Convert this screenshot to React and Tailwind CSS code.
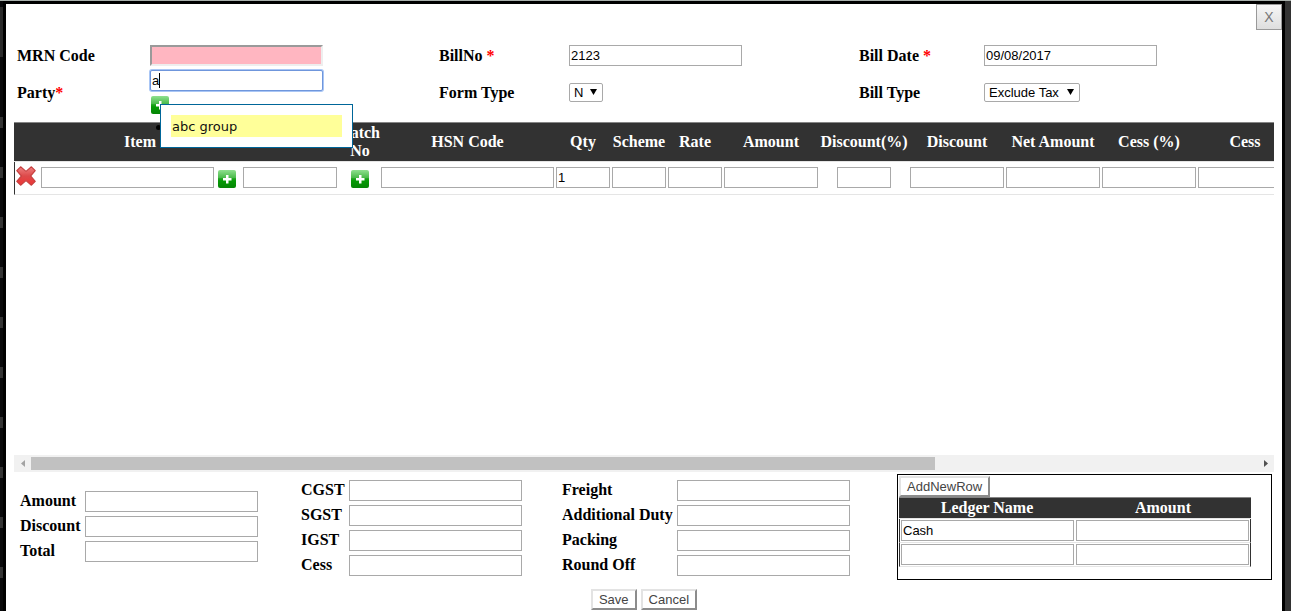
import React, { useState } from "react";

const FIELD =
  "block h-[21px] rounded-none border border-[#a9a9a9] bg-white px-px font-['Liberation_Sans',sans-serif] text-[13px] leading-4 text-black outline-none";
const WIDE = FIELD + " w-[173px]";
const MEDIUM = FIELD + " w-[94px]";
const SMALL = FIELD + " w-[54px]";

const COLUMNS = [
  { name: "", width: 26 },
  { name: "Item", width: 200 },
  { name: "", width: 100 },
  { name: "Batch No", width: 40 },
  { name: "HSN Code", width: 175 },
  { name: "Qty", width: 56 },
  { name: "Scheme", width: 56 },
  { name: "Rate", width: 56 },
  { name: "Amount", width: 96 },
  { name: "Discount(%)", width: 90 },
  { name: "Discount", width: 96 },
  { name: "Net Amount", width: 96 },
  { name: "Cess (%)", width: 96 },
  { name: "Cess", width: 96 },
  { name: "", width: 431 },
];

function PlusButton({ label }) {
  return (
    <button type="button" aria-label={label} className="block size-[18px] shrink-0">
      <svg viewBox="0 0 18 18" className="block size-[18px]">
        <defs>
          <linearGradient id="plusFill" x1="0" y1="0" x2="0" y2="1">
            <stop offset="0" stopColor="#8fe08f" />
            <stop offset="0.42" stopColor="#4cbb4c" />
            <stop offset="0.48" stopColor="#1ea51e" />
            <stop offset="0.6" stopColor="#069a06" />
            <stop offset="1" stopColor="#068506" />
          </linearGradient>
        </defs>
        <rect width="18" height="18" rx="2" fill="url(#plusFill)" />
        <path d="M8 5h2.500v3h3v2.500h-3v3H8v-3H5V8h3z" fill="#fff" />
      </svg>
    </button>
  );
}

function DeleteButton() {
  return (
    <button type="button" aria-label="Delete row" className="block size-5">
      <svg viewBox="0 0 20 20" className="block size-5">
        <defs>
          <linearGradient id="crossFill" x1="0" y1="0" x2="0" y2="1">
            <stop offset="0" stopColor="#ee8080" />
            <stop offset="0.5" stopColor="#dd4a4a" />
            <stop offset="1" stopColor="#ee3535" />
          </linearGradient>
        </defs>
        <path
          d="M4.600.8 10 5.400 15.400.8 19.200 4.600 14.600 10 19.200 15.400 15.400 19.200 10 14.600 4.600 19.200.8 15.400 5.400 10 .8 4.600z"
          fill="url(#crossFill)"
          stroke="#c84040"
          strokeWidth="1.200"
          strokeLinejoin="round"
        />
      </svg>
    </button>
  );
}

function Dropdown({ id, options, className }) {
  return (
    <div className={"relative " + className}>
      <select
        id={id}
        className="block h-[19px] w-full appearance-none rounded-xs border border-[#a9a9a9] bg-white pl-1 font-['Liberation_Sans',sans-serif] text-[13px] leading-4 text-black outline-none"
      >
        {options.map((o) => (
          <option key={o}>{o}</option>
        ))}
      </select>
      <svg viewBox="0 0 7 6" className="pointer-events-none absolute top-1.5 right-1.5 h-1.5 w-[7px]">
        <path d="M0 0h7L3.500 6z" fill="#000" />
      </svg>
    </div>
  );
}

function Label({ htmlFor, children, required, tight }) {
  return (
    <label htmlFor={htmlFor} className="font-bold whitespace-nowrap">
      {children}
      {required && <span className="text-[#f00]">{tight ? "*" : " *"}</span>}
    </label>
  );
}

function Push({ children }) {
  return (
    <button
      type="button"
      className="h-[21px] border-2 border-t-[#e3e3e3] border-r-[#8c8c8c] border-b-[#8c8c8c] border-l-[#e3e3e3] bg-white px-1.5 font-['Liberation_Sans',sans-serif] text-[13px] leading-4 text-[#444]"
    >
      {children}
    </button>
  );
}

function Totals({ names, labelClass, className = "" }) {
  return (
    <div className={"flex flex-col gap-1 " + className}>
      {names.map((n) => {
        const id = "total-" + n.toLowerCase().replace(" ", "-");
        return (
          <div key={n} className="flex items-start">
            <div className={"shrink-0 leading-5 " + labelClass}>
              <Label htmlFor={id}>{n}</Label>
            </div>
            <input id={id} className={WIDE} />
          </div>
        );
      })}
    </div>
  );
}

function HeaderForm() {
  const [party, setParty] = useState("a");
  return (
    <div className="grid grid-cols-[133fr_289fr_130fr_290fr_125fr_290fr] grid-rows-[21px_45px] items-center gap-y-1 pr-2 pl-[11px]">
      <Label htmlFor="mrn">MRN Code</Label>
      <input
        id="mrn"
        className="h-[21px] w-[173px] border-2 border-t-[#9a9a9a] border-r-[#eee] border-b-[#eee] border-l-[#9a9a9a] bg-[#ffb6c1] text-[13px] outline-none"
      />
      <Label htmlFor="billno" required>BillNo</Label>
      <input id="billno" defaultValue="2123" className={WIDE} />
      <Label htmlFor="billdate" required>Bill Date</Label>
      <input id="billdate" defaultValue="09/08/2017" className={WIDE} />

      <Label htmlFor="party" required tight>Party</Label>
      <div className="relative self-start">
        <input
          id="party"
          value={party}
          onChange={(e) => setParty(e.target.value)}
          className="block h-[21px] w-[173px] rounded-xs border border-[#6f96dc] bg-white px-px font-['Liberation_Sans',sans-serif] text-[13px] leading-4 text-black ring-1 ring-[#a9c6f5] outline-none"
        />
        <span className="absolute top-[3px] left-[9px] h-[15px] w-px bg-black" />
        <div className="mt-[5px] pl-px">
          <PlusButton label="Add party" />
        </div>
        <span className="absolute top-[55px] left-1.5 z-10 size-[5px] rounded-full bg-black" />
        <ul className="absolute top-[34px] left-2.5 z-20 w-[193px] border border-[#006699] bg-white p-2.5">
          <li className="h-[22px] bg-[#ffff99] px-px font-['DejaVu_Sans',sans-serif] text-[13px] leading-6 text-[#111]">
            abc group
          </li>
        </ul>
      </div>
      <Label htmlFor="formtype">Form Type</Label>
      <Dropdown id="formtype" options={["N"]} className="w-[34px]" />
      <Label htmlFor="billtype">Bill Type</Label>
      <Dropdown id="billtype" options={["Exclude Tax"]} className="w-24" />
    </div>
  );
}

function ItemGrid() {
  const cell = "h-[33px] border-b border-[#e5e5e5] p-0 pb-0.5";
  const center = "flex justify-center";
  return (
    <div className="mx-2 mt-[7px]">
      <div className="h-[333px] overflow-x-auto overflow-y-hidden [scrollbar-width:none]">
        <table className="w-[1710px] table-fixed border-separate border-spacing-0">
          <colgroup>
            {COLUMNS.map((c, i) => (
              <col key={i} style={{ width: c.width }} />
            ))}
          </colgroup>
          <thead>
            <tr className="bg-[#323232] text-white">
              {COLUMNS.map((c, i) => (
                <th
                  key={i}
                  className={
                    "h-10 border-t border-b border-t-[#858585] border-b-[#e5e5e5] p-0 text-center leading-[18px] font-bold " +
                    (c.name === "Batch No" ? "" : "whitespace-nowrap")
                  }
                >
                  {c.name}
                </th>
              ))}
            </tr>
          </thead>
          <tbody>
            <tr>
              <td className={cell + " border-l border-l-[#323232]"}>
                <div className="mb-0.5 pl-px"><DeleteButton /></div>
              </td>
              <td className={cell}>
                <div className="flex items-center gap-1 pl-px">
                  <input aria-label="Item" className={WIDE} />
                  <div className="pt-1"><PlusButton label="Add item" /></div>
                </div>
              </td>
              <td className={cell}><div className={center}><input aria-label="Batch" className={MEDIUM} /></div></td>
              <td className={cell}><div className="flex justify-center pt-1 pr-px"><PlusButton label="Add batch" /></div></td>
              <td className={cell}><div className={center}><input aria-label="HSN Code" className={WIDE} /></div></td>
              <td className={cell}><div className={center}><input aria-label="Qty" defaultValue="1" className={SMALL} /></div></td>
              <td className={cell}><div className={center}><input aria-label="Scheme" className={SMALL} /></div></td>
              <td className={cell}><div className={center}><input aria-label="Rate" className={SMALL} /></div></td>
              <td className={cell}><div className={center}><input aria-label="Amount" className={MEDIUM} /></div></td>
              <td className={cell}><div className={center}><input aria-label="Discount(%)" className={SMALL} /></div></td>
              <td className={cell}><div className={center}><input aria-label="Discount" className={MEDIUM} /></div></td>
              <td className={cell}><div className={center}><input aria-label="Net Amount" className={MEDIUM} /></div></td>
              <td className={cell}><div className={center}><input aria-label="Cess (%)" className={MEDIUM} /></div></td>
              <td className={cell}><div className={center}><input aria-label="Cess" className={MEDIUM} /></div></td>
              <td className={cell} />
            </tr>
          </tbody>
        </table>
      </div>
      <div className="flex h-[17px] items-center bg-[#f1f1f1]">
        <button type="button" aria-label="Scroll left" className="flex w-[17px] justify-center">
          <svg viewBox="0 0 4 7" className="h-[7px] w-1"><path d="M4 0v7L0 3.500z" fill="#a3a3a3" /></svg>
        </button>
        <div className="flex-1">
          <div className="h-[13px] w-[73.7%] bg-[#c1c1c1]" />
        </div>
        <button type="button" aria-label="Scroll right" className="flex w-[17px] justify-center">
          <svg viewBox="0 0 4 7" className="h-[7px] w-1"><path d="M0 0v7L4 3.500z" fill="#505050" /></svg>
        </button>
      </div>
    </div>
  );
}

function Ledger() {
  return (
    <div className="h-[106px] border border-black p-px">
      <div className="flex"><Push>AddNewRow</Push></div>
      <table className="w-[352px] table-fixed border-separate border-spacing-0">
        <thead>
          <tr className="bg-[#323232] text-white">
            {["Ledger Name", "Amount"].map((h) => (
              <th key={h} className="h-[22px] border-t border-b border-t-[#858585] border-b-[#e5e5e5] p-0 text-center leading-[18px] font-bold">
                {h}
              </th>
            ))}
          </tr>
        </thead>
        <tbody>
          {["Cash", ""].map((name, i) => (
            <tr key={i}>
              <td className="h-6 border-b border-l border-b-[#e5e5e5] border-l-[#323232] p-0 pl-px">
                <input aria-label="Ledger name" defaultValue={name} className={WIDE} />
              </td>
              <td className="h-6 border-r border-b border-r-[#323232] border-b-[#e5e5e5] p-0 pl-px">
                <input aria-label="Ledger amount" className={WIDE} />
              </td>
            </tr>
          ))}
        </tbody>
      </table>
    </div>
  );
}

export default function App() {
  return (
    <div className="flex min-h-screen flex-col font-['Liberation_Serif',serif] text-base leading-[18px] text-black">
      <div className="h-px bg-[#a9b0ac]" />
      <div className="flex flex-1">
        <div className="flex w-[3px] flex-col gap-[60px] overflow-hidden bg-[#09090b] pt-1.5">
          <div className="h-[50px] shrink-0 bg-[#2a2a2a]" />
          <div className="flex flex-col gap-[39px]">
            {[0, 1, 2, 3, 4, 5, 6, 7, 8, 9].map((n) => (
              <div key={n} className="h-[11px] bg-[#333]" />
            ))}
          </div>
        </div>
        <main className="min-w-0 flex-1 border-x-[3px] border-t-[3px] border-black bg-white">
          <div className="flex justify-end">
            <button
              type="button"
              className="h-[26px] w-[26px] border border-[#999] bg-linear-to-b from-[#f6f6f6] to-[#dedede] font-['Liberation_Sans',sans-serif] text-sm text-[#777]"
            >
              X
            </button>
          </div>
          <div className="mt-[15px]">
            <HeaderForm />
          </div>
          <ItemGrid />
          <div className="mt-0.5 grid grid-cols-[281fr_261fr_335fr_375fr] pr-2.5 pl-3.5">
            <Totals names={["Amount", "Discount", "Total"]} labelClass="w-[65px]" className="pt-[17px]" />
            <Totals names={["CGST", "SGST", "IGST", "Cess"]} labelClass="w-12" className="pt-1.5" />
            <Totals names={["Freight", "Additional Duty", "Packing", "Round Off"]} labelClass="w-[115px]" className="pt-1.5" />
            <Ledger />
          </div>
          <div className="mt-[9px] flex justify-center gap-1">
            <Push>Save</Push>
            <Push>Cancel</Push>
          </div>
        </main>
        <div className="w-1.5 bg-[#323232]" />
      </div>
    </div>
  );
}
